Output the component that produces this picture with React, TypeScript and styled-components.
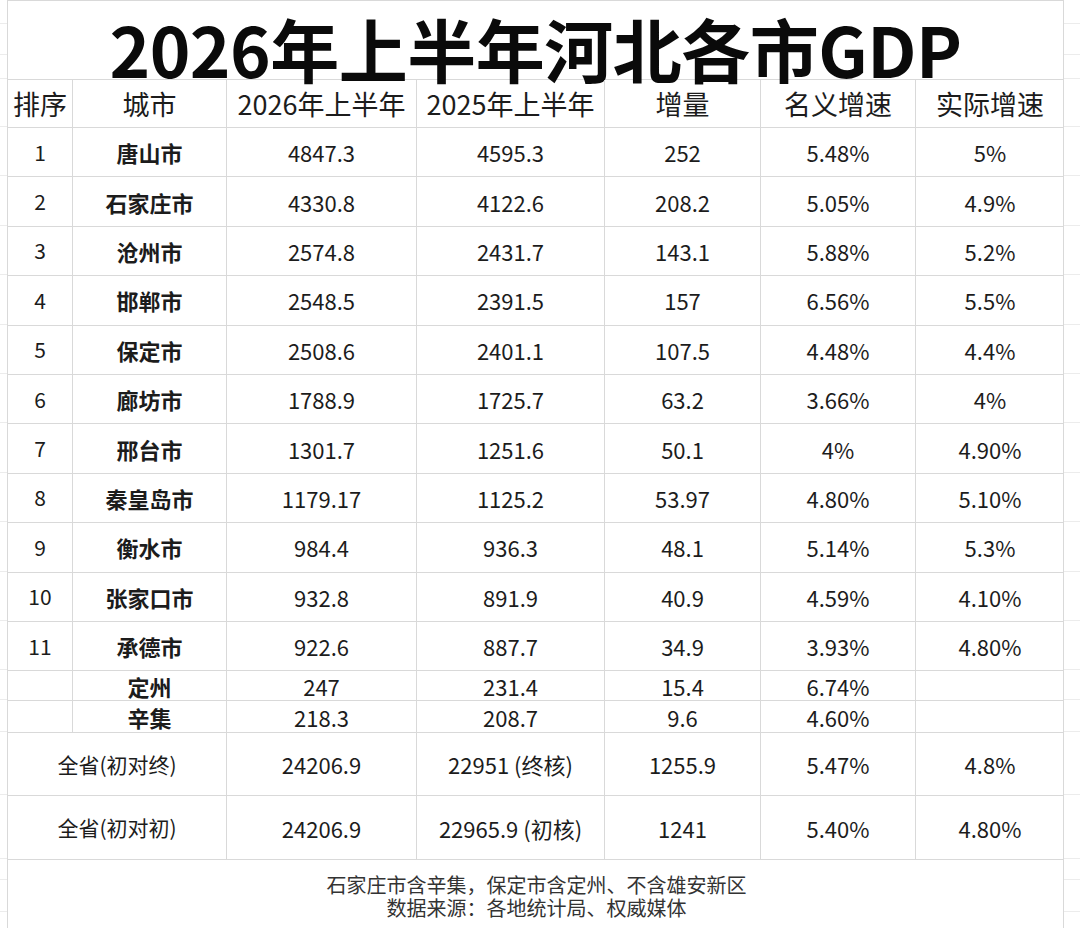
import React from 'react';
import styled, { createGlobalStyle } from 'styled-components';

const GlobalStyle = createGlobalStyle`
  html, body {
    margin: 0;
    padding: 0;
    background: #ffffff;
  }
  body {
    font-family: "Noto Sans CJK SC", "Noto Sans", sans-serif;
    color: #1c1c1c;
  }
`;

const COLUMNS = '65px 154px 190px 188px 156px 155px 149px';
const LINE = '#d9d9d9';
const FAINT = '#ececec';

const Page = styled.div`
  width: 1080px;
  height: 928px;
  overflow: hidden;
  display: flex;
  flex-direction: column;
`;

const TopStrip = styled.div`
  height: 3px;
  display: grid;
  grid-template-columns: 7px ${COLUMNS} 16px;
`;

const StripCell = styled.div`
  border-right: 1px solid ${FAINT};
  box-sizing: border-box;
`;

const Body = styled.div`
  display: flex;
  flex: 1;
`;

const Margin = styled.div<{ $w: number }>`
  width: ${p => p.$w}px;
  display: flex;
  flex-direction: column;
  flex-shrink: 0;
`;

const MarginCell = styled.div<{ $h: number }>`
  height: ${p => p.$h}px;
  border-bottom: 1px solid ${FAINT};
  box-sizing: border-box;
  flex-shrink: 0;
`;

const Table = styled.div`
  width: 1057px;
  border-left: 1px solid ${LINE};
  border-top: 1px solid ${LINE};
  border-right: 1px solid ${LINE};
  box-sizing: border-box;
  display: flex;
  flex-direction: column;
  flex-shrink: 0;
`;

const Row = styled.div<{ $h: number }>`
  height: ${p => p.$h}px;
  display: grid;
  grid-template-columns: 65px 154px 190px 188px 156px 155px 148px;
  flex-shrink: 0;
`;

const Cell = styled.div<{ $span?: number; $bold?: boolean; $size?: number; $last?: boolean }>`
  grid-column: span ${p => p.$span ?? 1};
  display: flex;
  align-items: center;
  justify-content: center;
  font-size: ${p => p.$size ?? 22}px;
  font-weight: ${p => (p.$bold ? 700 : 400)};
  line-height: 1;
  white-space: nowrap;
  border-right: ${p => (p.$last ? 'none' : `1px solid ${LINE}`)};
  border-bottom: 1px solid ${LINE};
  box-sizing: border-box;
`;

const TitleCell = styled.div`
  height: 79px;
  border-bottom: 1px solid ${LINE};
  box-sizing: border-box;
  display: flex;
  justify-content: center;
  align-items: flex-start;
  padding-top: 19px;
  font-size: 69px;
  font-weight: 700;
  line-height: 56px;
  color: #0a0a0a;
  letter-spacing: -0.5px;
  white-space: nowrap;
  flex-shrink: 0;
`;

const FooterCell = styled.div`
  flex: 1;
  display: flex;
  flex-direction: column;
  align-items: center;
  justify-content: center;
  font-size: 20px;
  line-height: 23px;
  color: #333333;
  padding-left: 2px;
`;

type CityRow = [string, string, string, string, string, string, string];

const cities: CityRow[] = [
  ['1', '唐山市', '4847.3', '4595.3', '252', '5.48%', '5%'],
  ['2', '石家庄市', '4330.8', '4122.6', '208.2', '5.05%', '4.9%'],
  ['3', '沧州市', '2574.8', '2431.7', '143.1', '5.88%', '5.2%'],
  ['4', '邯郸市', '2548.5', '2391.5', '157', '6.56%', '5.5%'],
  ['5', '保定市', '2508.6', '2401.1', '107.5', '4.48%', '4.4%'],
  ['6', '廊坊市', '1788.9', '1725.7', '63.2', '3.66%', '4%'],
  ['7', '邢台市', '1301.7', '1251.6', '50.1', '4%', '4.90%'],
  ['8', '秦皇岛市', '1179.17', '1125.2', '53.97', '4.80%', '5.10%'],
  ['9', '衡水市', '984.4', '936.3', '48.1', '5.14%', '5.3%'],
  ['10', '张家口市', '932.8', '891.9', '40.9', '4.59%', '4.10%'],
  ['11', '承德市', '922.6', '887.7', '34.9', '3.93%', '4.80%'],
];

const subCities: { h: number; row: CityRow }[] = [
  { h: 30, row: ['', '定州', '247', '231.4', '15.4', '6.74%', ''] },
  { h: 32, row: ['', '辛集', '218.3', '208.7', '9.6', '4.60%', ''] },
];

const totals: { h: number; row: string[] }[] = [
  { h: 63, row: ['全省(初对终)', '24206.9', '22951 (终核)', '1255.9', '5.47%', '4.8%'] },
  { h: 64, row: ['全省(初对初)', '24206.9', '22965.9 (初核)', '1241', '5.40%', '4.80%'] },
];

const headers = ['排序', '城市', '2026年上半年', '2025年上半年', '增量', '名义增速', '实际增速'];

const ROW_H = 49.4;

const marginHeights = [
  24, 31, 24, 48,
  ...cities.map(() => ROW_H),
  ...subCities.map(s => s.h),
  ...totals.map(t => t.h),
  21, 32, 20,
];

const renderCityRow = (row: CityRow, h: number, key: string) => (
  <Row key={key} $h={h}>
    <Cell $size={21}>{row[0]}</Cell>
    <Cell $bold>{row[1]}</Cell>
    <Cell>{row[2]}</Cell>
    <Cell>{row[3]}</Cell>
    <Cell>{row[4]}</Cell>
    <Cell>{row[5]}</Cell>
    <Cell $last>{row[6]}</Cell>
  </Row>
);

export default function App() {
  return (
    <Page>
      <GlobalStyle />
      <TopStrip>
        {Array.from({ length: 9 }).map((_, i) => (
          <StripCell key={i} />
        ))}
      </TopStrip>
      <Body>
        <Margin $w={7}>
          {marginHeights.map((h, i) => (
            <MarginCell key={i} $h={h} />
          ))}
        </Margin>
        <Table>
          <TitleCell>2026年上半年河北各市GDP</TitleCell>
          <Row $h={48}>
            {headers.map((t, i) => (
              <Cell key={t} $size={27} $last={i === headers.length - 1}>
                {t}
              </Cell>
            ))}
          </Row>
          {cities.map((r, i) => renderCityRow(r, ROW_H, `c${i}`))}
          {subCities.map((s, i) => renderCityRow(s.row, s.h, `s${i}`))}
          {totals.map((t, i) => (
            <Row key={`t${i}`} $h={t.h}>
              <Cell $span={2} $size={21}>{t.row[0]}</Cell>
              <Cell>{t.row[1]}</Cell>
              <Cell>{t.row[2]}</Cell>
              <Cell>{t.row[3]}</Cell>
              <Cell>{t.row[4]}</Cell>
              <Cell $last>{t.row[5]}</Cell>
            </Row>
          ))}
          <FooterCell>
            <div>石家庄市含辛集，保定市含定州、不含雄安新区</div>
            <div>数据来源：各地统计局、权威媒体</div>
          </FooterCell>
        </Table>
        <Margin $w={16}>
          {marginHeights.map((h, i) => (
            <MarginCell key={i} $h={h} />
          ))}
        </Margin>
      </Body>
    </Page>
  );
}
